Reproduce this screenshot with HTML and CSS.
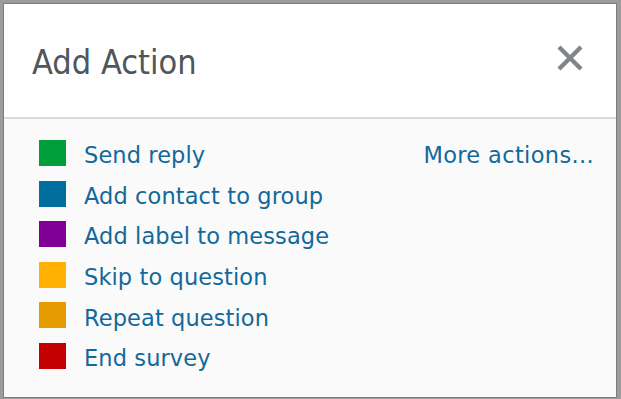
FILE: index.html
```html
<!DOCTYPE html>
<html lang="en">
<head>
<meta charset="utf-8">
<title>Add Action</title>
<link rel="stylesheet" href="styles.css">
</head>
<body>
<div class="modal">
  <div class="modal-header">
    <h1 class="modal-title">Add Action</h1>
    <svg class="close" width="26" height="26" viewBox="0 0 26 26" aria-label="Close">
      <path d="M2 2 L24 24 M24 2 L2 24" stroke="#828587" stroke-width="4.4" fill="none"/>
    </svg>
  </div>
  <div class="modal-body">
    <ul class="actions">
      <li class="action"><span class="swatch green"></span><span class="label">Send reply</span></li>
      <li class="action"><span class="swatch blue"></span><span class="label">Add contact to group</span></li>
      <li class="action"><span class="swatch purple"></span><span class="label">Add label to message</span></li>
      <li class="action"><span class="swatch yellow"></span><span class="label">Skip to question</span></li>
      <li class="action"><span class="swatch amber"></span><span class="label">Repeat question</span></li>
      <li class="action"><span class="swatch red"></span><span class="label">End survey</span></li>
    </ul>
    <div class="more">More actions...</div>
  </div>
</div>
</body>
</html>
```

FILE: styles.css
```css
html, body {
  margin: 0;
  padding: 0;
}

body {
  background: #9c9c9c;
  width: 621px;
  height: 399px;
  overflow: hidden;
}

.modal {
  box-sizing: border-box;
  margin: 3px 0 0 3px;
  width: 614px;
  height: 395px;
  border: 1px solid #7c7c7c;
  background: #fafafa;
  display: flex;
  flex-direction: column;
  font-family: "DejaVu Sans", Verdana, sans-serif;
}

.modal-header {
  box-sizing: border-box;
  height: 115px;
  padding: 40.5px 33px 0 28px;
  background: #ffffff;
  border-bottom: 2px solid #dadada;
  display: flex;
  justify-content: space-between;
  align-items: flex-start;
}

.modal-title {
  margin: 0;
  font-family: "DejaVu Sans Condensed", "DejaVu Sans", sans-serif;
  font-stretch: condensed;
  font-weight: normal;
  font-size: 34px;
  line-height: 34px;
  color: #50565a;
}

.close {
  display: block;
  margin-top: 0.5px;
}

.modal-body {
  flex: 1;
  display: flex;
  justify-content: space-between;
  align-items: flex-start;
  padding: 16.2px 22px 0 35px;
  font-size: 22.5px;
  line-height: 40.6px;
  letter-spacing: 0.1px;
  color: #12699a;
}

.actions {
  list-style: none;
  margin: 0;
  padding: 0;
}

.action {
  display: flex;
  align-items: flex-start;
  gap: 18px;
  height: 40.6px;
}

.swatch {
  flex: none;
  width: 27px;
  height: 26px;
  margin-top: 4.8px;
}

.green { background: #009e3a; }
.blue { background: #006f9f; }
.purple { background: #800096; }
.yellow { background: #ffb000; }
.amber { background: #e69c00; }
.red { background: #c40000; }

.more {
  white-space: nowrap;
  letter-spacing: 0.35px;
}
```
